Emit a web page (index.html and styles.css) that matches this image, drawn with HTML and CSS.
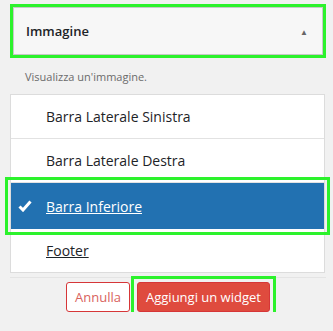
FILE: index.html
```html
<!DOCTYPE html>
<html lang="it">
<head>
    <meta charset="UTF-8">
    <meta name="viewport" content="width=device-width, initial-scale=1.0">
    <link rel="stylesheet" href="styles.css">
    <title>Aggiungi un widget</title>
</head>
<body>
    <div class="panel">
        <div class="highlight">
            <div class="widget-top">
                <span class="widget-title">Immagine</span>
                <span class="widget-arrow">&#9650;</span>
            </div>
        </div>
        <p class="widget-desc">Visualizza un'immagine.</p>

        <ul class="areas">
            <li class="area">Barra Laterale Sinistra</li>
            <li class="area">Barra Laterale Destra</li>
            <li class="area selected">
                <svg class="check" width="14" height="12" viewBox="0 0 14 12">
                    <path d="M1.5 6.5 L5 10 L12.5 1.5" fill="none" stroke="#fff" stroke-width="3"/>
                </svg>
                <span class="area-name">Barra Inferiore</span>
            </li>
            <li class="area"><span class="area-name">Footer</span></li>
        </ul>

        <div class="actions">
            <button class="btn btn-cancel">Annulla</button>
            <span class="btn-wrap">
                <button class="btn btn-add">Aggiungi un widget</button>
            </span>
        </div>
    </div>
</body>
</html>
```

FILE: styles.css
```css
body {
    margin: 0;
    background-color: #f1f1f1;
    font-family: 'Open Sans', 'Noto Sans', sans-serif;
    color: #1d2327;
}

.panel {
    padding: 4px 7px 0 10px;
}

.highlight {
    border: 3px solid #2cf22c;
}

.widget-top {
    display: flex;
    align-items: center;
    justify-content: space-between;
    height: 46px;
    padding: 0 14px 0 12px;
    background-color: #f7f7f7;
    border: 1px solid #c8c8c8;
}

.widget-title {
    font-size: 13px;
    font-weight: 600;
}

.widget-arrow {
    font-size: 8px;
    color: #666;
}

.widget-desc {
    margin: 11px 0 10px 15px;
    font-size: 11px;
    color: #6b6b6b;
}

.areas {
    list-style: none;
    margin: 0;
    padding: 0;
    background-color: #fff;
    border: 1px solid #dcdcdc;
    width: 313px;
}

.area {
    height: 43px;
    line-height: 43px;
    padding-left: 35px;
    font-size: 14px;
    border-bottom: 1px solid #e2e2e2;
}

.area:last-child {
    border-bottom: none;
}

.area-name {
    text-decoration: underline;
}

.area.selected {
    display: flex;
    align-items: center;
    height: 46px;
    padding-left: 7px;
    line-height: normal;
    background-color: #2271b1;
    border-bottom: none;
    color: #fff;
    outline: 3px solid #2cf22c;
    outline-offset: 3px;
}

.check {
    margin-right: 14px;
}

.actions {
    display: flex;
    justify-content: center;
    align-items: center;
    gap: 7px;
    margin-top: 4px;
    padding-top: 4px;
    border-top: 1px solid #e4e4e4;
}

.btn {
    height: 30px;
    padding: 0 8px;
    font-family: inherit;
    font-size: 13px;
    border-radius: 3px;
    cursor: pointer;
}

.btn-cancel {
    background-color: #fff;
    border: 1px solid #d63638;
    color: #d9625d;
}

.btn-wrap {
    display: flex;
    margin: -6px;
    padding: 3px;
    border: 3px solid #2cf22c;
}

.btn-add {
    background-color: #df4b3e;
    border: 1px solid #d63638;
    color: #fff;
}
```
